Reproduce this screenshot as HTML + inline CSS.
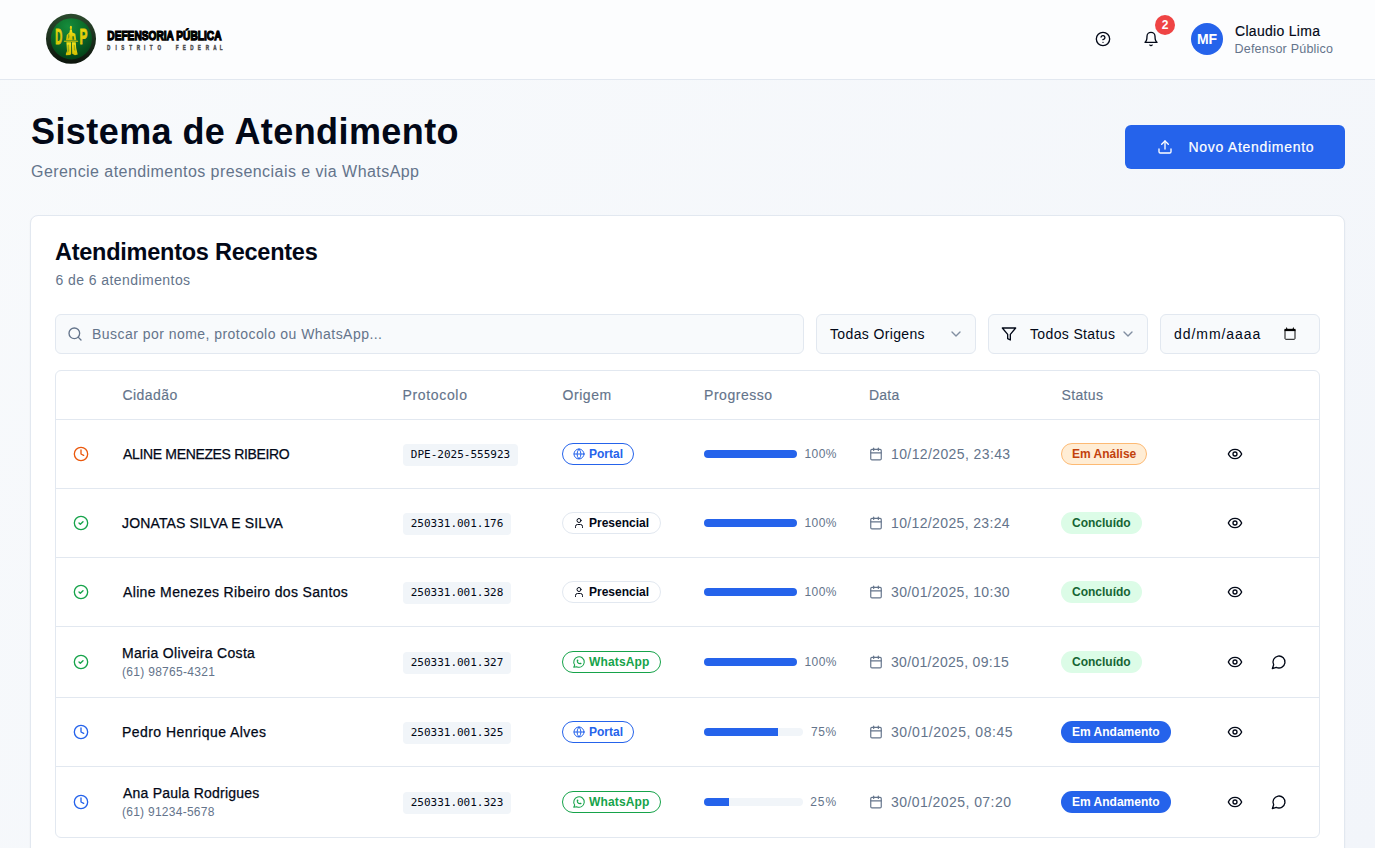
<!DOCTYPE html>
<html lang="pt-BR">
<head>
<meta charset="utf-8">
<title>Sistema de Atendimento</title>
<style>
*{box-sizing:border-box;margin:0;padding:0}
html,body{width:1375px;height:848px;overflow:hidden}
body{font-family:"Liberation Sans",sans-serif;background:linear-gradient(135deg,#f8fafc 0%,#f2f5fa 100%);color:#020817;position:relative}
svg{display:block}
.ic{fill:none;stroke:currentColor;stroke-width:2;stroke-linecap:round;stroke-linejoin:round}
.abs{position:absolute}
header{position:absolute;left:0;top:0;width:1375px;height:80px;background:#fcfdfe;border-bottom:1px solid #e2e8f0}
.logo{position:absolute;left:46px;top:14px}
.hicon{position:absolute;width:16px;height:16px;color:#020817}
.notif{position:absolute;left:1155px;top:15px;width:20px;height:20px;border-radius:10px;background:#ef4444;color:#fff;font-size:12px;font-weight:700;text-align:center;line-height:20px}
.avatar{position:absolute;left:1191px;top:23px;width:32px;height:32px;border-radius:16px;background:#2563eb;color:#fff;font-size:14px;font-weight:700;text-align:center;line-height:32px}
.uname{-webkit-text-stroke:.15px #020817;position:absolute;left:1235px;top:22px;letter-spacing:.3px;font-size:14px;line-height:18px;color:#020817;white-space:nowrap}
.urole{position:absolute;left:1234.5px;top:41px;letter-spacing:.22px;font-size:12.5px;line-height:16px;color:#64748b;white-space:nowrap}
h1{position:absolute;left:31px;top:110px;letter-spacing:.42px;font-size:36px;line-height:44px;font-weight:700;color:#020817;white-space:nowrap}
.sub{position:absolute;left:31px;top:160px;letter-spacing:.44px;font-size:16px;line-height:24px;color:#64748b;white-space:nowrap}
.btn{position:absolute;left:1125px;top:125px;width:220px;height:44px;border-radius:6px;background:#2563eb;color:#fff}
.btn svg{position:absolute;left:32px;top:14px;width:16px;height:16px}
.btn span{-webkit-text-stroke:.2px #fff;position:absolute;left:63.5px;letter-spacing:.71px;top:12px;font-size:14px;line-height:20px;white-space:nowrap}
.card{position:absolute;left:30px;top:215px;width:1315px;height:700px;border:1px solid #e2e8f0;border-radius:8px;background:#fff;box-shadow:0 1px 2px rgba(0,0,0,.05)}
h2{position:absolute;left:55px;top:236px;letter-spacing:-.25px;font-size:23.5px;line-height:32px;font-weight:700;color:#020817;white-space:nowrap}
.cnt{position:absolute;left:55.5px;top:270px;letter-spacing:.43px;font-size:14px;line-height:20px;color:#64748b;white-space:nowrap}
.fld{position:absolute;top:314px;height:40px;border:1px solid #e2e8f0;border-radius:6px;background:#f8fafc;font-size:14px;color:#020817}
.fld span{position:absolute;top:9px;line-height:20px;white-space:nowrap}
.fld svg{position:absolute}
.tbl{position:absolute;left:55px;top:370px;width:1265px;height:468px;border:1px solid #e2e8f0;border-radius:6px;background:#fff;overflow:hidden}
.row{position:relative;width:100%;border-bottom:1px solid #e2e8f0}
.row:last-child{border-bottom:0}
.th{position:absolute;top:14px;font-size:14px;line-height:20px;color:#64748b;white-space:nowrap;-webkit-text-stroke:.15px #64748b}

.nm{position:absolute;left:66px;font-size:14px;line-height:24px;color:#020817;white-space:nowrap;-webkit-text-stroke:0.25px #020817}
.ph{position:absolute;left:66px;font-size:12px;line-height:16px;color:#64748b;white-space:nowrap}
.code{position:absolute;left:347px;height:22px;border-radius:4px;background:#f1f5f9;font-family:"DejaVu Sans Mono","Liberation Mono",monospace;font-size:11px;line-height:22px;text-align:center;color:#020817;white-space:nowrap}
.bdg{position:absolute;left:506px;height:22px;border-radius:11px;border:1px solid transparent;font-size:12px;font-weight:700;line-height:20px;white-space:nowrap}
.bdg svg{position:absolute;left:10px;top:4px;width:12px;height:12px}
.bdg span{position:absolute;left:26px;top:0}
.o-portal{border-color:#2563eb;color:#2563eb}
.o-pres{border-color:#e2e8f0;color:#020817}
.o-wa{border-color:#16a34a;color:#16a34a}
.o-wa svg{left:9px;top:3px;width:14px;height:14px;stroke-width:1.8}
.s-an{background:#ffedd5;border-color:#fdba74;color:#c2410c}
.s-co{background:#dcfce7;color:#166534}
.s-ad{background:#2563eb;color:#fff}
.s-an span,.s-co span,.s-ad span{left:10px}
.bar{position:absolute;left:648px;height:8px;border-radius:4px;background:#f1f5f9;overflow:hidden}
.bar i{display:block;height:8px;background:#2563eb}
.pct{position:absolute;right:482px;font-size:12px;line-height:16px;color:#64748b;white-space:nowrap}
.dt{position:absolute;left:835px;font-size:14px;line-height:20px;color:#64748b;white-space:nowrap}
</style>
</head>
<body>
<header>
  <svg class="abs" style="left:40px;top:8px;width:190px;height:64px" viewBox="40 8 190 64">
<defs>
<linearGradient id="lgr" x1="0" y1="0" x2="0" y2="1"><stop offset="0" stop-color="#2c4a2e"/><stop offset="1" stop-color="#0c140c"/></linearGradient>
<radialGradient id="lgi" cx="0.42" cy="0.2" r="0.85"><stop offset="0" stop-color="#168c3c"/><stop offset="0.5" stop-color="#0b6a28"/><stop offset="1" stop-color="#033c16"/></radialGradient>
<linearGradient id="lgy" x1="0" y1="0" x2="0" y2="1"><stop offset="0" stop-color="#f4e21a"/><stop offset="1" stop-color="#d2bd00"/></linearGradient>
</defs>
<circle cx="71" cy="38.800" r="25" fill="url(#lgr)"/>
<circle cx="71.400" cy="38.800" r="20.600" fill="url(#lgi)"/>
<text x="55.300" y="44" font-family="Liberation Sans, sans-serif" font-weight="700" font-size="22.800" fill="url(#lgy)" stroke="#e0cc08" stroke-width=".9" textLength="7" lengthAdjust="spacingAndGlyphs">D</text>
<text x="79.600" y="44" font-family="Liberation Sans, sans-serif" font-weight="700" font-size="22.800" fill="url(#lgy)" stroke="#e0cc08" stroke-width=".9" textLength="7.900" lengthAdjust="spacingAndGlyphs">P</text>
<g fill="url(#lgy)">
<ellipse cx="70.900" cy="27.700" rx="1.100" ry="1.900"/>
<path d="M70 29.500h1.900l.4 3 3 1.300 1 6.500h-10.300l.8-5.300 2.600-2.400z"/>
<rect x="63.800" y="40.800" width="14.400" height=".9" rx=".4"/>
<path d="M66.400 42.200h4.700l.1 11.500-.9 1.300-4.300.3-.2-1.300 1.200-3z"/>
<path d="M71.900 42.200h3.900l.4 5.800 1.500 6.600-2.700.6-2.800-1.400z"/>
</g>
<path d="M72.300 36.200h1.600l.3 3.600h-1.700z" fill="#0c6a28" opacity=".8"/>
<path d="M68 34.500l1.200-.6.300 3-1.600 2.400z" fill="#0c6a28" opacity=".45"/>
<path d="M67.600 45l1.400-.5.200 6.500-1.800 2z" fill="#0c6a28" opacity=".35"/>
<path d="M73.600 44.500l1.300.5.400 6-1.400-1z" fill="#0c6a28" opacity=".35"/>
<text x="107.300" y="39.950" font-family="Liberation Sans, sans-serif" font-weight="700" font-size="13.100" fill="#000" stroke="#000" stroke-width="1.250" stroke-linejoin="miter" textLength="114.200" lengthAdjust="spacingAndGlyphs">DEFENSORIA PÚBLICA</text>
<text transform="translate(.6,0) scale(0.62,1)" x="174.25 186.45 197.13 209.78 222.29 232.20 242.87 255.84 270.32 284.81 296.25 308.44 320.64 333.61 345.81 355.72" y="49.700" text-anchor="middle" font-family="Liberation Sans, sans-serif" font-weight="700" font-size="7.400" fill="#4c4c4c" stroke="#4c4c4c" stroke-width=".45">DISTRITO FEDERAL</text>
</svg>
  <svg class="hicon ic" style="left:1095px;top:31px" viewBox="0 0 24 24"><circle cx="12" cy="12" r="10"/><path d="M9.09 9a3 3 0 0 1 5.83 1c0 2-3 3-3 3"/><path d="M12 17h.01"/></svg>
  <svg class="hicon ic" style="left:1143px;top:31px" viewBox="0 0 24 24"><path d="M6 8a6 6 0 0 1 12 0c0 7 3 9 3 9H3s3-2 3-9"/><path d="M10.3 21a1.94 1.94 0 0 0 3.4 0"/></svg>
  <div class="notif">2</div>
  <div class="avatar">MF</div>
  <div class="uname">Claudio Lima</div>
  <div class="urole">Defensor Público</div>
</header>
<h1>Sistema de Atendimento</h1>
<div class="sub">Gerencie atendimentos presenciais e via WhatsApp</div>
<div class="btn"><svg class="ic" viewBox="0 0 24 24"><path d="M21 15v4a2 2 0 0 1-2 2H5a2 2 0 0 1-2-2v-4"/><polyline points="17 8 12 3 7 8"/><line x1="12" x2="12" y1="3" y2="15"/></svg><span>Novo Atendimento</span></div>
<div class="card"></div>
<h2>Atendimentos Recentes</h2>
<div class="cnt">6 de 6 atendimentos</div>
<div class="fld" style="left:55px;width:749px"><svg class="ic" style="left:11px;top:11px;width:16px;height:16px;color:#64748b" viewBox="0 0 24 24"><circle cx="11" cy="11" r="8"/><path d="m21 21-4.3-4.3"/></svg><span style="left:36px;color:#64748b;letter-spacing:.46px">Buscar por nome, protocolo ou WhatsApp...</span></div>
<div class="fld" style="left:816px;width:160px"><span style="left:13px;letter-spacing:.36px">Todas Origens</span><svg class="ic" style="left:131px;top:11px;width:16px;height:16px;color:#64748b;opacity:.8" viewBox="0 0 24 24"><path d="m6 9 6 6 6-6"/></svg></div>
<div class="fld" style="left:988px;width:160px"><svg class="ic" style="left:12px;top:11px;width:16px;height:16px" viewBox="0 0 24 24"><polygon points="22 3 2 3 10 12.46 10 19 14 21 14 12.46 22 3"/></svg><span style="left:41px;letter-spacing:.36px">Todos Status</span><svg class="ic" style="left:131px;top:11px;width:16px;height:16px;color:#64748b;opacity:.8" viewBox="0 0 24 24"><path d="m6 9 6 6 6-6"/></svg></div>
<div class="fld" style="left:1160px;width:160px"><span style="left:13px;letter-spacing:.94px">dd/mm/aaaa</span><svg style="left:121px;top:12px;width:16px;height:16px" viewBox="0 0 16 16"><rect x="3" y="2.400" width="10" height="9.900" rx=".8" fill="none" stroke="#0a0a0a" stroke-width="1"/><rect x="2.500" y="1.900" width="11" height="2.200" fill="#000"/><path d="M4 2l.5-1.800h.4l.5 1.800zM10.600 2l.5-1.800h.4l.5 1.800z" fill="#000"/></svg></div>
<div class="tbl">
<div class="row" style="height:49px">
<div class="th" style="left:66.5px;letter-spacing:.45px">Cidadão</div>
<div class="th" style="left:346.5px;letter-spacing:.66px">Protocolo</div>
<div class="th" style="left:506.5px;letter-spacing:.56px">Origem</div>
<div class="th" style="left:648px;letter-spacing:.54px">Progresso</div>
<div class="th" style="left:813px;letter-spacing:.2px">Data</div>
<div class="th" style="left:1005.5px;letter-spacing:.34px">Status</div>
</div>
<div class="row" style="height:69px">
<svg class="ic abs" style="left:17px;top:26px;width:16px;height:16px;color:#ea580c" viewBox="0 0 24 24"><circle cx="12" cy="12" r="10"/><polyline points="12 6 12 12 16 14"/></svg>
<div class="nm" style="top:22px;letter-spacing:-0.34px;margin-left:1px">ALINE MENEZES RIBEIRO</div>
<div class="code" style="top:24px;width:115px">DPE-2025-555923</div>
<div class="bdg o-portal" style="top:23px;width:72px"><svg class="ic" viewBox="0 0 24 24"><circle cx="12" cy="12" r="10"/><path d="M12 2a14.5 14.5 0 0 0 0 20 14.5 14.5 0 0 0 0-20"/><path d="M2 12h20"/></svg><span>Portal</span></div>
<div class="bar" style="top:30px;width:93px"><i style="width:100%"></i></div>
<div class="pct" style="top:26px;letter-spacing:0.47px">100%</div>
<svg class="ic abs" style="left:813px;top:27px;width:14px;height:14px;color:#64748b" viewBox="0 0 24 24"><path d="M8 2v4"/><path d="M16 2v4"/><rect width="18" height="18" x="3" y="4" rx="2"/><path d="M3 10h18"/></svg>
<div class="dt" style="top:24px;letter-spacing:0.39px">10/12/2025, 23:43</div>
<div class="bdg s-an" style="left:1005px;top:23px;width:86px"><span>Em Análise</span></div>
<svg class="ic abs" style="left:1171px;top:26px;width:16px;height:16px;color:#020817" viewBox="0 0 24 24"><path d="M2 12s3-7 10-7 10 7 10 7-3 7-10 7-10-7-10-7Z"/><circle cx="12" cy="12" r="3"/></svg>
</div>
<div class="row" style="height:69px">
<svg class="ic abs" style="left:17px;top:26px;width:16px;height:16px;color:#16a34a" viewBox="0 0 24 24"><circle cx="12" cy="12" r="10"/><path d="m9 12 2 2 4-4"/></svg>
<div class="nm" style="top:22px;letter-spacing:0.15px">JONATAS SILVA E SILVA</div>
<div class="code" style="top:24px;width:108px">250331.001.176</div>
<div class="bdg o-pres" style="top:23px;width:99px"><svg class="ic" viewBox="0 0 24 24"><path d="M19 21v-2a4 4 0 0 0-4-4H9a4 4 0 0 0-4 4v2"/><circle cx="12" cy="7" r="4"/></svg><span>Presencial</span></div>
<div class="bar" style="top:30px;width:93px"><i style="width:100%"></i></div>
<div class="pct" style="top:26px;letter-spacing:0.47px">100%</div>
<svg class="ic abs" style="left:813px;top:27px;width:14px;height:14px;color:#64748b" viewBox="0 0 24 24"><path d="M8 2v4"/><path d="M16 2v4"/><rect width="18" height="18" x="3" y="4" rx="2"/><path d="M3 10h18"/></svg>
<div class="dt" style="top:24px;letter-spacing:0.36px">10/12/2025, 23:24</div>
<div class="bdg s-co" style="left:1005px;top:23px;width:81px"><span>Concluído</span></div>
<svg class="ic abs" style="left:1171px;top:26px;width:16px;height:16px;color:#020817" viewBox="0 0 24 24"><path d="M2 12s3-7 10-7 10 7 10 7-3 7-10 7-10-7-10-7Z"/><circle cx="12" cy="12" r="3"/></svg>
</div>
<div class="row" style="height:69px">
<svg class="ic abs" style="left:17px;top:26px;width:16px;height:16px;color:#16a34a" viewBox="0 0 24 24"><circle cx="12" cy="12" r="10"/><path d="m9 12 2 2 4-4"/></svg>
<div class="nm" style="top:22px;letter-spacing:0.35px;margin-left:1px">Aline Menezes Ribeiro dos Santos</div>
<div class="code" style="top:24px;width:108px">250331.001.328</div>
<div class="bdg o-pres" style="top:23px;width:99px"><svg class="ic" viewBox="0 0 24 24"><path d="M19 21v-2a4 4 0 0 0-4-4H9a4 4 0 0 0-4 4v2"/><circle cx="12" cy="7" r="4"/></svg><span>Presencial</span></div>
<div class="bar" style="top:30px;width:93px"><i style="width:100%"></i></div>
<div class="pct" style="top:26px;letter-spacing:0.47px">100%</div>
<svg class="ic abs" style="left:813px;top:27px;width:14px;height:14px;color:#64748b" viewBox="0 0 24 24"><path d="M8 2v4"/><path d="M16 2v4"/><rect width="18" height="18" x="3" y="4" rx="2"/><path d="M3 10h18"/></svg>
<div class="dt" style="top:24px;letter-spacing:0.36px">30/01/2025, 10:30</div>
<div class="bdg s-co" style="left:1005px;top:23px;width:81px"><span>Concluído</span></div>
<svg class="ic abs" style="left:1171px;top:26px;width:16px;height:16px;color:#020817" viewBox="0 0 24 24"><path d="M2 12s3-7 10-7 10 7 10 7-3 7-10 7-10-7-10-7Z"/><circle cx="12" cy="12" r="3"/></svg>
</div>
<div class="row" style="height:71px">
<svg class="ic abs" style="left:17px;top:27px;width:16px;height:16px;color:#16a34a" viewBox="0 0 24 24"><circle cx="12" cy="12" r="10"/><path d="m9 12 2 2 4-4"/></svg>
<div class="nm" style="top:14px;letter-spacing:0.32px">Maria Oliveira Costa</div>
<div class="ph" style="top:37px;letter-spacing:0.3px">(61) 98765-4321</div>
<div class="code" style="top:25px;width:108px">250331.001.327</div>
<div class="bdg o-wa" style="top:24px;width:99px"><svg class="ic" viewBox="0 0 24 24"><path d="M3 21l1.650-3.800a9 9 0 1 1 3.400 2.900l-5.050.900"/><path d="M9 10a.5.5 0 0 0 1 0v-1a.5.5 0 0 0-1 0v1a5 5 0 0 0 5 5h1a.5.5 0 0 0 0-1h-1a.5.5 0 0 0 0 1"/></svg><span style="letter-spacing:.15px">WhatsApp</span></div>
<div class="bar" style="top:31px;width:93px"><i style="width:100%"></i></div>
<div class="pct" style="top:27px;letter-spacing:0.47px">100%</div>
<svg class="ic abs" style="left:813px;top:28px;width:14px;height:14px;color:#64748b" viewBox="0 0 24 24"><path d="M8 2v4"/><path d="M16 2v4"/><rect width="18" height="18" x="3" y="4" rx="2"/><path d="M3 10h18"/></svg>
<div class="dt" style="top:25px;letter-spacing:0.31px">30/01/2025, 09:15</div>
<div class="bdg s-co" style="left:1005px;top:24px;width:81px"><span>Concluído</span></div>
<svg class="ic abs" style="left:1171px;top:27px;width:16px;height:16px;color:#020817" viewBox="0 0 24 24"><path d="M2 12s3-7 10-7 10 7 10 7-3 7-10 7-10-7-10-7Z"/><circle cx="12" cy="12" r="3"/></svg>
<svg class="ic abs" style="left:1215px;top:27px;width:16px;height:16px;color:#020817" viewBox="0 0 24 24"><path d="M7.9 20A9 9 0 1 0 4 16.1L2 22Z"/></svg>
</div>
<div class="row" style="height:69px">
<svg class="ic abs" style="left:17px;top:26px;width:16px;height:16px;color:#2563eb" viewBox="0 0 24 24"><circle cx="12" cy="12" r="10"/><polyline points="12 6 12 12 16 14"/></svg>
<div class="nm" style="top:22px;letter-spacing:0.45px">Pedro Henrique Alves</div>
<div class="code" style="top:24px;width:108px">250331.001.325</div>
<div class="bdg o-portal" style="top:23px;width:72px"><svg class="ic" viewBox="0 0 24 24"><circle cx="12" cy="12" r="10"/><path d="M12 2a14.5 14.5 0 0 0 0 20 14.5 14.5 0 0 0 0-20"/><path d="M2 12h20"/></svg><span>Portal</span></div>
<div class="bar" style="top:30px;width:99px"><i style="width:75%"></i></div>
<div class="pct" style="top:26px;letter-spacing:0.7px">75%</div>
<svg class="ic abs" style="left:813px;top:27px;width:14px;height:14px;color:#64748b" viewBox="0 0 24 24"><path d="M8 2v4"/><path d="M16 2v4"/><rect width="18" height="18" x="3" y="4" rx="2"/><path d="M3 10h18"/></svg>
<div class="dt" style="top:24px;letter-spacing:0.54px">30/01/2025, 08:45</div>
<div class="bdg s-ad" style="left:1005px;top:23px;width:110px"><span>Em Andamento</span></div>
<svg class="ic abs" style="left:1171px;top:26px;width:16px;height:16px;color:#020817" viewBox="0 0 24 24"><path d="M2 12s3-7 10-7 10 7 10 7-3 7-10 7-10-7-10-7Z"/><circle cx="12" cy="12" r="3"/></svg>
</div>
<div class="row" style="height:70px">
<svg class="ic abs" style="left:17px;top:27px;width:16px;height:16px;color:#2563eb" viewBox="0 0 24 24"><circle cx="12" cy="12" r="10"/><polyline points="12 6 12 12 16 14"/></svg>
<div class="nm" style="top:14px;letter-spacing:0.22px;margin-left:1px">Ana Paula Rodrigues</div>
<div class="ph" style="top:37px;letter-spacing:0.26px">(61) 91234-5678</div>
<div class="code" style="top:25px;width:108px">250331.001.323</div>
<div class="bdg o-wa" style="top:24px;width:99px"><svg class="ic" viewBox="0 0 24 24"><path d="M3 21l1.650-3.800a9 9 0 1 1 3.400 2.900l-5.050.900"/><path d="M9 10a.5.5 0 0 0 1 0v-1a.5.5 0 0 0-1 0v1a5 5 0 0 0 5 5h1a.5.5 0 0 0 0-1h-1a.5.5 0 0 0 0 1"/></svg><span style="letter-spacing:.15px">WhatsApp</span></div>
<div class="bar" style="top:31px;width:99px"><i style="width:25%"></i></div>
<div class="pct" style="top:27px;letter-spacing:0.9px">25%</div>
<svg class="ic abs" style="left:813px;top:28px;width:14px;height:14px;color:#64748b" viewBox="0 0 24 24"><path d="M8 2v4"/><path d="M16 2v4"/><rect width="18" height="18" x="3" y="4" rx="2"/><path d="M3 10h18"/></svg>
<div class="dt" style="top:25px;letter-spacing:0.44px">30/01/2025, 07:20</div>
<div class="bdg s-ad" style="left:1005px;top:24px;width:110px"><span>Em Andamento</span></div>
<svg class="ic abs" style="left:1171px;top:27px;width:16px;height:16px;color:#020817" viewBox="0 0 24 24"><path d="M2 12s3-7 10-7 10 7 10 7-3 7-10 7-10-7-10-7Z"/><circle cx="12" cy="12" r="3"/></svg>
<svg class="ic abs" style="left:1215px;top:27px;width:16px;height:16px;color:#020817" viewBox="0 0 24 24"><path d="M7.9 20A9 9 0 1 0 4 16.1L2 22Z"/></svg>
</div>
</div>
</body>
</html>
